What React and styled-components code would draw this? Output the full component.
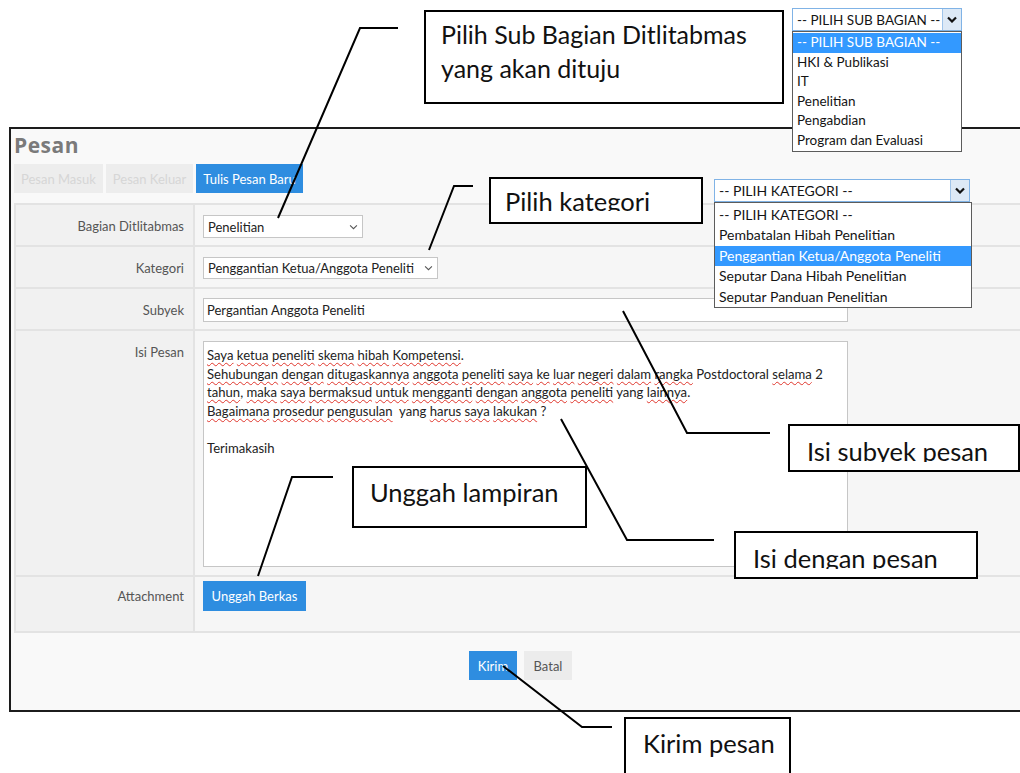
import React from 'react'
import styled, { createGlobalStyle } from 'styled-components'

const UI_FONT = `"Lato", "Open Sans", "Liberation Sans", sans-serif`

const GlobalStyle = createGlobalStyle`
  html, body { margin: 0; padding: 0; background: #ffffff; }
  body { font-family: ${UI_FONT}; overflow: hidden; }
`

const SUB_BAGIAN = ['-- PILIH SUB BAGIAN --', 'HKI & Publikasi', 'IT', 'Penelitian', 'Pengabdian', 'Program dan Evaluasi']
const KATEGORI = ['-- PILIH KATEGORI --', 'Pembatalan Hibah Penelitian', 'Penggantian Ketua/Anggota Peneliti', 'Seputar Dana Hibah Penelitian', 'Seputar Panduan Penelitian']

const MESSAGE = [
    'Saya ketua peneliti skema hibah Kompetensi.',
    'Sehubungan dengan ditugaskannya anggota peneliti saya ke luar negeri dalam rangka Postdoctoral selama 2',
    'tahun, maka saya bermaksud untuk mengganti dengan anggota peneliti yang lainnya.',
    'Bagaimana prosedur pengusulan  yang harus saya lakukan ?',
    '',
    'Terimakasih',
]
// words the spell checker did not flag
const CORRECT = new Set(['Postdoctoral', 'yang', 'Terimakasih', '?', '2', ''])

// callout leader lines
const LEADERS = [
    '278,218 360,28 398,28',
    '429,250 454,186 473,186',
    '623,311 687,433 770,433',
    '561,419 627,540 714,540',
    '258,576 292,477 333,477',
    '503,666 582,727 612,727',
]

const Chevron = ({ bold }) => (
    <svg width={bold ? 10 : 9} height={bold ? 7 : 6} viewBox="0 0 10 7">
        <polyline points="1,1.5 5,5.5 9,1.5" fill="none" stroke={bold ? '#111' : '#555'} strokeWidth={bold ? 2.2 : 1.2} />
    </svg>
)

const MessageLine = ({ text }) => {
    const parts = text.split(/( +)/)
    return (
        <Line>
            {parts.map((part, i) => {
                if (/^ +$/.test(part) || part === '') return part
                const m = part.match(/^(.*?)([.,?]*)$/)
                const word = m[1]
                const punct = m[2]
                if (CORRECT.has(word)) return <span key={i}>{part}</span>
                return (
                    <span key={i}><Misspelled>{word}</Misspelled>{punct}</span>
                )
            })}
            {text === '' ? '\u00a0' : null}
        </Line>
    )
}

const App = () => {
    return (
        <Page>
            <GlobalStyle />
            <Frame>
                <Inner>
                    <Title>Pesan</Title>
                    <TabBar>
                        <Tab>Pesan Masuk</Tab>
                        <Tab>Pesan Keluar</Tab>
                        <Tab $active>Tulis Pesan Baru</Tab>
                    </TabBar>

                    <FormTable>
                        <Row>
                            <Label $pt={10} $lh={23}>Bagian Ditlitabmas</Label>
                            <Value $pt={10} $pb={7}>
                                <Select $w={160} $h={23}>Penelitian<Chevron /></Select>
                            </Value>
                        </Row>
                        <Row>
                            <Label $pt={10} $lh={22}>Kategori</Label>
                            <Value $pt={10} $pb={8}>
                                <Select $w={235} $h={22}>Penggantian Ketua/Anggota Peneliti<Chevron /></Select>
                            </Value>
                        </Row>
                        <Row>
                            <Label $pt={9} $lh={24}>Subyek</Label>
                            <Value $pt={9} $pb={7}>
                                <TextInput>Pergantian Anggota Peneliti</TextInput>
                            </Value>
                        </Row>
                        <Row>
                            <Label $pt={10} $lh={23}>Isi Pesan</Label>
                            <Value $pt={10} $pb={8}>
                                <TextArea>
                                    {MESSAGE.map((l, i) => <MessageLine key={i} text={l} />)}
                                </TextArea>
                            </Value>
                        </Row>
                        <Row>
                            <Label $pt={4} $lh={30}>Attachment</Label>
                            <Value $pt={4} $pb={20}>
                                <Button $primary $w={103} $h={30}>Unggah Berkas</Button>
                            </Value>
                        </Row>
                    </FormTable>

                    <Footer>
                        <Button $primary $w={48}>Kirim</Button>
                        <Button $w={48}>Batal</Button>
                    </Footer>
                </Inner>
            </Frame>

            <Dropdown $x={792} $y={8} $w={170} $fs={13.5}>
                <DropSelect>
                    <DropValue>-- PILIH SUB BAGIAN --</DropValue>
                    <DropArrow><Chevron bold /></DropArrow>
                </DropSelect>
                <DropList $lw={170} $pt={1}>
                    {SUB_BAGIAN.map((o, i) => (
                        <DropOption key={o} $rh={19.6} $selected={i === 0}>{o}</DropOption>
                    ))}
                </DropList>
            </Dropdown>

            <Dropdown $x={714} $y={179} $w={256} $fs={14}>
                <DropSelect>
                    <DropValue>-- PILIH KATEGORI --</DropValue>
                    <DropArrow><Chevron bold /></DropArrow>
                </DropSelect>
                <DropList $lw={258} $pt={2}>
                    {KATEGORI.map((o, i) => (
                        <DropOption key={o} $rh={20.4} $selected={i === 2}>{o}</DropOption>
                    ))}
                </DropList>
            </Dropdown>

            <Callout $x={424} $y={10} $w={360} $h={94} $pt={5} $pl={15} $lh={34} $fs={25}>
                <CalloutText>{'Pilih Sub Bagian Ditlitabmas\nyang akan dituju'}</CalloutText>
            </Callout>
            <Callout $x={489} $y={177} $w={214} $h={47} $pt={7} $pl={14} $lh={30}>
                <CalloutText $clip={25}>Pilih kategori</CalloutText>
            </Callout>
            <Callout $x={788} $y={424} $w={232} $h={48} $pt={10} $pl={17} $lh={30}>
                <CalloutText $clip={26}>Isi subyek pesan</CalloutText>
            </Callout>
            <Callout $x={734} $y={531} $w={244} $h={48} $pt={10} $pl={17} $lh={30}>
                <CalloutText $clip={26}>Isi dengan pesan</CalloutText>
            </Callout>
            <Callout $x={352} $y={466} $w={235} $h={62} $pt={9} $pl={16} $lh={30}>
                <CalloutText>Unggah lampiran</CalloutText>
            </Callout>
            <Callout $x={624} $y={717} $w={167} $h={70} $pt={9} $pl={17} $lh={30}>
                <CalloutText>Kirim pesan</CalloutText>
            </Callout>

            <Leaders width="1020" height="773" viewBox="0 0 1020 773">
                {LEADERS.map(p => (
                    <polyline key={p} points={p} fill="none" stroke="#000" strokeWidth="2" />
                ))}
            </Leaders>
        </Page>
    )
}

export default App



const Page = styled.div`
    position: relative;
    width: 1020px;
    height: 773px;
    overflow: hidden;
    box-sizing: border-box;
    padding: 127px 0 0 9px;
`;
const Frame = styled.div`
    height: 585px;
    box-sizing: border-box;
    border: 2px solid #1c1c1c;
    border-right: none;
    background: #f9f9f9;
    overflow: hidden;
`;
const Inner = styled.div`
    width: 1013px;
    padding: 4px 0 0 3px;
`;
const Title = styled.h1`
    margin: 0;
    font: 700 21px/24px "Open Sans", "Noto Sans", sans-serif;
    color: #7a7a7a;
    letter-spacing: 0.5px;
`;
const TabBar = styled.div`
    display: flex;
    gap: 3px;
    margin-top: 7px;
`;
const Tab = styled.div`
    height: 29px;
    display: flex;
    align-items: center;
    padding: 0 7px;
    font-size: 13px;
    background: ${p => p.$active ? '#2e8de0' : '#ededed'};
    color: ${p => p.$active ? '#ffffff' : '#d6d6d6'};
`;
const FormTable = styled.div`
    margin-top: 10px;
    border: 2px solid #e3e3e3;
    border-right: none;
    background: #f6f6f6;
`;
const Row = styled.div`
    display: grid;
    grid-template-columns: 179px 1fr;
    & + & {
        border-top: 2px solid #e3e3e3;
    }
`;
const Label = styled.div`
    background: #f1f1f1;
    border-right: 2px solid #e3e3e3;
    text-align: right;
    padding: ${p => p.$pt}px 9px 0 0;
    line-height: ${p => p.$lh}px;
    font-size: 13px;
    color: #555555;
`;
const Value = styled.div`
    padding: ${p => `${p.$pt}px 0 ${p.$pb}px 8px`};
`;
const Select = styled.div`
    width: ${p => p.$w}px;
    height: ${p => p.$h}px;
    box-sizing: border-box;
    border: 1px solid #c6c6c6;
    background: #ffffff;
    display: flex;
    align-items: center;
    justify-content: space-between;
    padding: 0 4px 0 4px;
    font-size: 13px;
    color: #222222;
`;
const TextInput = styled.div`
    width: 645px;
    height: 24px;
    box-sizing: border-box;
    border: 1px solid #c6c6c6;
    background: #ffffff;
    display: flex;
    align-items: center;
    padding-left: 3px;
    font-size: 13px;
    color: #222222;
`;
const TextArea = styled.div`
    width: 645px;
    height: 226px;
    box-sizing: border-box;
    border: 1px solid #c6c6c6;
    background: #ffffff;
    padding: 4px 3px;
    font-size: 13.1px;
    line-height: 18.5px;
    color: #222222;
`;
const Line = styled.div`
    white-space: pre;
`;
const Misspelled = styled.span`
    text-decoration: underline wavy #e0362c;
    text-decoration-thickness: 1px;
    text-decoration-skip-ink: none;
    text-underline-offset: 2px;
`;
const Button = styled.div`
    width: ${p => p.$w}px;
    height: ${p => p.$h || 29}px;
    display: inline-flex;
    align-items: center;
    justify-content: center;
    font-size: 13px;
    background: ${p => p.$primary ? '#2e8de0' : '#ececec'};
    color: ${p => p.$primary ? '#ffffff' : '#555555'};
`;
const Footer = styled.div`
    display: flex;
    justify-content: center;
    gap: 7px;
    padding-top: 18px;
`;

/* open dropdowns pasted over the screenshot */
const Dropdown = styled.div`
    position: absolute;
    left: ${p => p.$x}px;
    top: ${p => p.$y}px;
    width: ${p => p.$w}px;
    z-index: 3;
    font-size: ${p => p.$fs}px;
    color: #141414;
`;
const DropSelect = styled.div`
    height: 23px;
    box-sizing: border-box;
    border: 1px solid #80b3e6;
    background: #ffffff;
    display: flex;
`;
const DropValue = styled.div`
    flex: 1;
    display: flex;
    align-items: center;
    padding-left: 4px;
`;
const DropArrow = styled.div`
    width: 18px;
    background: #dde9f6;
    border-left: 1px solid #9fc4ea;
    display: flex;
    align-items: center;
    justify-content: center;
`;
const DropList = styled.div`
    width: ${p => p.$lw}px;
    box-sizing: border-box;
    border: 1px solid #5c5c5c;
    background: #ffffff;
    padding-top: ${p => p.$pt}px;
`;
const DropOption = styled.div`
    height: ${p => p.$rh}px;
    line-height: ${p => p.$rh}px;
    padding-left: 4px;
    white-space: nowrap;
    background: ${p => p.$selected ? '#3399ff' : 'transparent'};
    color: ${p => p.$selected ? '#ffffff' : '#141414'};
`;

/* annotation boxes */
const Callout = styled.div`
    position: absolute;
    left: ${p => p.$x}px;
    top: ${p => p.$y}px;
    width: ${p => p.$w}px;
    height: ${p => p.$h}px;
    box-sizing: border-box;
    border: 2px solid #000000;
    background: #ffffff;
    z-index: 6;
    padding: ${p => `${p.$pt}px 0 0 ${p.$pl}px`};
    font: 400 ${p => p.$fs || 25.5}px/${p => p.$lh}px "Lato", "Open Sans", sans-serif;
    color: #111111;
    overflow: hidden;
`;
const CalloutText = styled.div`
    white-space: pre-line;
    height: ${p => p.$clip ? `${p.$clip}px` : 'auto'};
    overflow: hidden;
`;
const Leaders = styled.svg`
    position: absolute;
    left: 0;
    top: 0;
    z-index: 7;
    pointer-events: none;
`;
